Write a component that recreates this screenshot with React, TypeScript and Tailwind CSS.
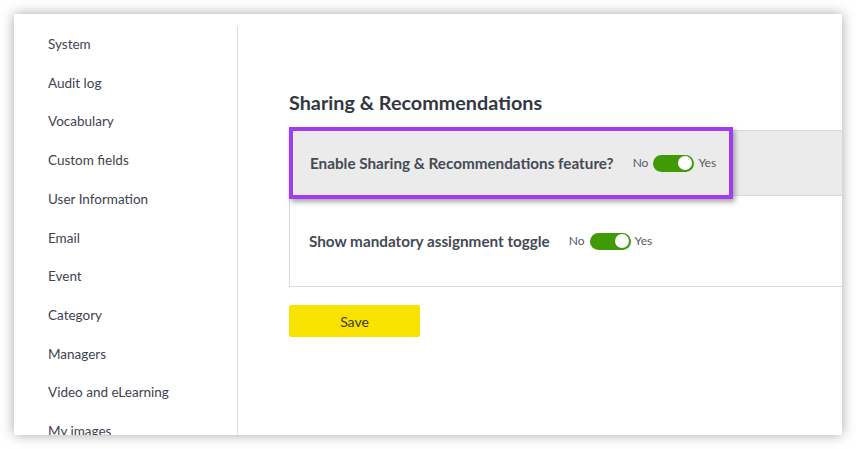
const NAV_ITEMS = [
  'System',
  'Audit log',
  'Vocabulary',
  'Custom fields',
  'User Information',
  'Email',
  'Event',
  'Category',
  'Managers',
  'Video and eLearning',
  'My images',
];

function Toggle() {
  return (
    <div className="flex items-center gap-[5px] text-[12px] text-[#555b64]">
      <span>No</span>
      <span className="w-[41px] h-[17px] rounded-full bg-[#3f9a06] flex items-center justify-end pr-[2px]">
        <span className="w-[14px] h-[14px] rounded-full bg-white" />
      </span>
      <span className="-ml-[1px]">Yes</span>
    </div>
  );
}

export default function App() {
  return (
    <div
      className="w-[856px] h-[449px] bg-white p-[14px]"
      style={{ fontFamily: 'Lato, "Open Sans", sans-serif' }}
    >
      <div className="w-full h-full bg-white overflow-hidden flex shadow-[0_0_12px_rgba(0,0,0,0.35)]">
        {/* Sidebar */}
        <aside className="w-[224px] shrink-0 mt-[12px] border-r border-[#dcdcdc] pl-[34px]">
          <ul className="-mt-[1px] flex flex-col">
            {NAV_ITEMS.map(item => (
              <li key={item} className="text-[13.5px] leading-[38.7px] text-[#3d4350] whitespace-nowrap">
                {item}
              </li>
            ))}
          </ul>
        </aside>

        {/* Main */}
        <main className="flex-1 pl-[51px] pt-[74px] min-w-0">
          <h1 className="text-[19.8px] leading-[28px] font-bold text-[#333840] mb-[14px]">
            Sharing &amp; Recommendations
          </h1>

          <div className="relative w-[620px] border border-[#d9d9d9]">
            <div className="h-[65px] bg-[#ebebeb] border-b border-[#d9d9d9] flex items-center pl-[20px] gap-[19px]">
              <span className="text-[15.25px] font-bold text-[#444a54]">Enable Sharing &amp; Recommendations feature?</span>
              <Toggle />
            </div>
            <div className="h-[90px] bg-white flex items-center pl-[19px] gap-[19px]">
              <span className="text-[15.25px] font-bold text-[#444a54]">Show mandatory assignment toggle</span>
              <Toggle />
            </div>

            {/* highlight overlay */}
            <div className="absolute -left-[1px] -top-[4px] w-[444px] h-[72px] border-4 border-[#a23cf2] shadow-[2px_3px_5px_rgba(0,0,0,0.35)]" />
          </div>

          <button className="mt-[18px] w-[131px] h-[32px] bg-[#f9e100] rounded-[2px] text-[14px] text-[#3b3b30]">
            Save
          </button>
        </main>
      </div>
    </div>
  );
}
